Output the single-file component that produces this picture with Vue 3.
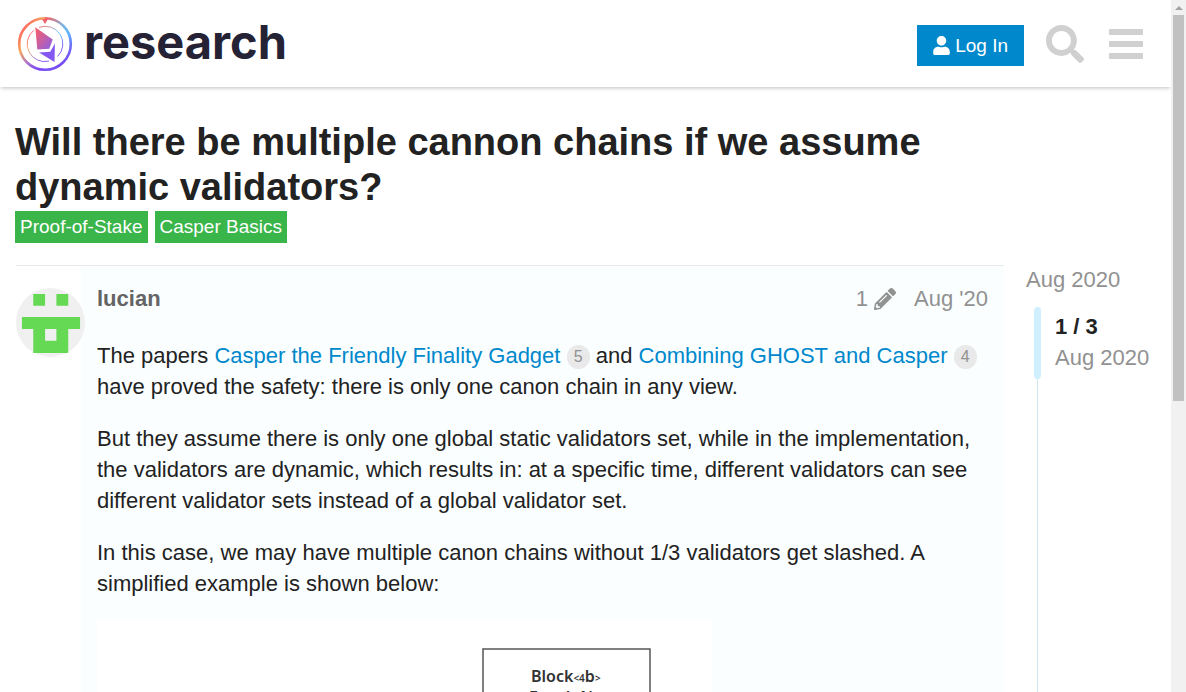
<script setup>
const tags = ['Proof-of-Stake', 'Casper Basics']
</script>

<template>
  <div class="window">
    <div class="page">
      <header class="site-header">
        <a class="brand" href="#" aria-label="research home">
          <svg class="brand-mark" viewBox="0 0 56 56" aria-hidden="true">
            <defs>
              <linearGradient id="left" x1="0" y1="0" x2="0.7" y2="1">
                <stop offset="0.15" stop-color="#ff5f62" />
                <stop offset="0.45" stop-color="#f5a75c" />
                <stop offset="0.75" stop-color="#a76ed0" />
                <stop offset="1" stop-color="#7a4bf5" />
              </linearGradient>
              <linearGradient id="right" x1="0" y1="0" x2="0.3" y2="1">
                <stop offset="0" stop-color="#f5605f" />
                <stop offset="0.3" stop-color="#84b4dc" />
                <stop offset="0.5" stop-color="#5cb8ff" />
                <stop offset="0.75" stop-color="#6b72f5" />
                <stop offset="1" stop-color="#7a4bf5" />
              </linearGradient>
              <linearGradient id="gem" x1="0" y1="0" x2="1" y2="1">
                <stop offset="0" stop-color="#ff5f62" />
                <stop offset="1" stop-color="#8a60e8" />
              </linearGradient>
            </defs>
            <path d="M28 2.2A25.8 25.8 0 0 0 28 53.8" fill="none" stroke="url(#left)" stroke-width="2.6" />
            <path d="M28 2.2A25.8 25.8 0 0 1 28 53.8" fill="none" stroke="url(#right)" stroke-width="2.6" />
            <path d="M25 3h6l-3 5z" fill="#ee5f6c" />
            <path d="M16.500 14.500A17.6 17.6 0 0 0 32 45.100" fill="none" stroke="url(#left)" stroke-width="0.9" />
            <path d="M22 11.400A17.6 17.6 0 0 1 40.500 40.500" fill="none" stroke="url(#right)" stroke-width="0.9" />
            <path d="M18.300 11.300 35.700 23.600 32.300 32.800 20.300 33.500z" fill="url(#gem)" />
            <path d="M22 36.600 33.300 35.700 37.900 27.500 37.500 46z" fill="#8457f2" />
          </svg>
          <span class="brand-name">research</span>
        </a>
        <nav class="header-actions" aria-label="Site">
          <button class="login" type="button">
            <svg class="login-icon" viewBox="0 0 448 512" aria-hidden="true">
              <path fill="currentColor" d="M224 256c70.700 0 128-57.300 128-128S294.700 0 224 0 96 57.300 96 128s57.300 128 128 128zm89.600 32h-16.700c-22.200 10.200-46.900 16-72.900 16s-50.600-5.800-72.900-16h-16.700C60.200 288 0 348.200 0 422.400V464c0 26.500 21.500 48 48 48h352c26.500 0 48-21.500 48-48v-41.600c0-74.200-60.200-134.400-134.400-134.400z" />
            </svg>
            Log In
          </button>
          <button class="icon-button" type="button" aria-label="Search">
            <svg class="search-icon" viewBox="0 0 512 512" aria-hidden="true">
              <path fill="currentColor" d="M505 442.700L405.300 343c-4.500-4.500-10.600-7-17-7H372c27.600-35.300 44-79.700 44-128C416 93.100 322.900 0 208 0S0 93.100 0 208s93.100 208 208 208c48.300 0 92.700-16.400 128-44v16.300c0 6.400 2.500 12.500 7 17l99.700 99.700c9.400 9.400 24.600 9.400 33.900 0l28.300-28.300c9.400-9.400 9.400-24.600.1-34zM208 336c-70.700 0-128-57.200-128-128 0-70.700 57.200-128 128-128 70.700 0 128 57.200 128 128 0 70.700-57.200 128-128 128z" />
            </svg>
          </button>
          <button class="icon-button" type="button" aria-label="Menu">
            <svg class="menu-icon" viewBox="0 0 34 30" aria-hidden="true">
              <g fill="currentColor">
                <rect width="34" height="6" rx="1" />
                <rect y="12" width="34" height="6" rx="1" />
                <rect y="24" width="34" height="6" rx="1" />
              </g>
            </svg>
          </button>
        </nav>
      </header>

      <main class="topic">
        <h1>Will there be multiple cannon chains if we assume dynamic validators?</h1>
        <div class="tags">
          <a v-for="tag in tags" :key="tag" class="tag" href="#">{{ tag }}</a>
        </div>

        <div class="columns">
          <article class="post">
            <a class="avatar" href="#" aria-label="lucian">
              <svg viewBox="0 0 70 70" aria-hidden="true">
                <circle cx="35" cy="35" r="35" fill="#f0f0f0" />
                <path fill="#65d854" d="M17.500 6h12v12h-12zM41 6h12v12H41zM6 29.500h59v12H53V66H17.500V41.500H6zM29.500 41.500v12H41v-12z" />
              </svg>
            </a>
            <div class="post-body">
              <div class="post-meta">
                <a class="author" href="#">lucian</a>
                <button class="edits" type="button" aria-label="1 edit">
                  1
                  <svg class="pencil" viewBox="0 0 512 512" aria-hidden="true">
                    <path fill="currentColor" d="M497.900 142.100l-46.100 46.100c-4.700 4.700-12.300 4.700-17 0l-111-111c-4.700-4.700-4.700-12.300 0-17l46.100-46.100c18.700-18.700 49.100-18.700 67.900 0l60.100 60.100c18.800 18.700 18.800 49.100 0 67.900zM284.200 99.800L21.600 362.400.4 483.900c-2.900 16.400 11.400 30.600 27.800 27.800l121.500-21.300 262.600-262.600c4.700-4.700 4.700-12.300 0-17l-111-111c-4.800-4.700-12.400-4.700-17.100 0zM124.100 339.900c-5.500-5.500-5.500-14.300 0-19.800l154-154c5.500-5.500 14.300-5.500 19.800 0s5.500 14.300 0 19.800l-154 154c-5.500 5.500-14.300 5.500-19.800 0zM88 424h48v36.300l-64.500 11.300-31.100-31.100L51.700 376H88v48z" />
                  </svg>
                </button>
                <a class="date" href="#">Aug '20</a>
              </div>
              <div class="cooked">
                <p>
                  The papers <a href="#">Casper the Friendly Finality Gadget</a> <span class="clicks">5</span> and
                  <a href="#">Combining GHOST and Casper</a> <span class="clicks">4</span> have proved the safety: there
                  is only one canon chain in any view.
                </p>
                <p>
                  But they assume there is only one global static validators set, while in the implementation, the
                  validators are dynamic, which results in: at a specific time, different validators can see different
                  validator sets instead of a global validator set.
                </p>
                <p>
                  In this case, we may have multiple canon chains without 1/3 validators get slashed. A simplified
                  example is shown below:
                </p>
                <svg class="figure" viewBox="0 0 615 400" role="img" aria-label="Example block diagram">
                  <rect width="615" height="400" fill="#fff" />
                  <rect x="386" y="29" width="167" height="120" fill="none" stroke="#555" stroke-width="1.500" />
                  <g fill="#333" font-weight="600">
                    <text x="434" y="62" font-size="16">Block<tspan font-size="10">&lt;4</tspan>b<tspan font-size="10">&gt;</tspan></text>
                    <text x="432" y="83" font-size="16">Epoch N</text>
                  </g>
                </svg>
              </div>
            </div>
          </article>

          <aside class="timeline" aria-label="Topic timeline">
            <a class="start-date" href="#">Aug 2020</a>
            <div class="track">
              <div class="handle"></div>
              <div class="position">
                <strong>1 / 3</strong>
                <span>Aug 2020</span>
              </div>
            </div>
          </aside>
        </div>
      </main>
    </div>
    <div class="scrollbar" aria-hidden="true">
      <div class="scroll-arrow"></div>
      <div class="scroll-thumb"></div>
    </div>
  </div>
</template>

<style>
body {
  margin: 0;
  background: #fff;
}
</style>

<style scoped>
.window {
  display: grid;
  grid-template-columns: minmax(0, 1fr) 15px;
  height: 100vh;
  overflow: hidden;
  color: #222;
  font-family: "Liberation Sans", Arial, sans-serif;
  font-size: 22px;
  line-height: 31px;
}
a {
  color: inherit;
  text-decoration: none;
}
button {
  display: flex;
  align-items: center;
  padding: 0;
  border: 0;
  background: none;
  color: inherit;
  font: inherit;
  cursor: pointer;
}
.page {
  display: flex;
  flex-direction: column;
  min-height: 0;
  overflow: hidden;
}
.site-header {
  display: flex;
  flex: none;
  align-items: center;
  justify-content: space-between;
  height: 87px;
  padding: 0 25px 0 17px;
  box-shadow: 0 2px 4px -1px rgba(0, 0, 0, 0.25);
}
.brand {
  display: flex;
  align-items: center;
  gap: 11px;
}
.brand-mark {
  width: 56px;
  height: 56px;
}
.brand-name {
  padding-bottom: 4px;
  color: #252236;
  font: 700 47px/56px Inter, sans-serif;
}
.header-actions {
  display: flex;
  align-items: center;
  color: #d0d0d0;
}
.login {
  gap: 5px;
  height: 41px;
  margin: 4px 21px 0 0;
  padding: 0 16px;
  background: #0088cc;
  color: #fff;
  font-size: 19px;
}
.login-icon {
  width: 17px;
  height: 19px;
}
.icon-button {
  width: 40px;
  height: 40px;
  justify-content: center;
}
.icon-button + .icon-button {
  margin-left: 21px;
}
.search-icon {
  width: 38px;
  height: 38px;
}
.menu-icon {
  width: 34px;
  height: 30px;
}
.topic {
  min-height: 0;
  padding: 33px 15px 0;
}
h1 {
  max-width: 988px;
  margin: 0;
  font-size: 38px;
  line-height: 45px;
}
.tags {
  display: flex;
  gap: 7px;
  margin: 1px 0 22px;
}
.tag {
  padding: 0 5px;
  background: #3ab54a;
  color: #fff;
  font-size: 19px;
  line-height: 32px;
}
.columns {
  display: grid;
  grid-template-columns: minmax(0, 1fr) 130px;
  gap: 22px;
}
.post {
  display: grid;
  grid-template-columns: 65px minmax(0, 1fr);
  margin-left: 1px;
  border-top: 1px solid #e9e9e9;
}
.avatar {
  z-index: 1;
  width: 69px;
  height: 69px;
  padding-top: 22px;
}
.avatar svg {
  display: block;
}
.post-body {
  padding: 17px 16px 0;
  background: #fafeff;
}
.post-meta {
  display: flex;
  align-items: center;
  color: #919191;
}
.author {
  margin-right: auto;
  color: #646464;
  font-weight: bold;
}
.edits {
  gap: 6px;
}
.pencil {
  width: 22px;
  height: 22px;
}
.date {
  margin-left: 18px;
}
.cooked {
  padding-top: 26px;
}
p {
  margin: 0 0 21px;
}
p a {
  color: #0088cc;
}
.clicks {
  display: inline-block;
  min-width: 23px;
  border-radius: 12px;
  background: #e9e9e9;
  color: #919191;
  font-size: 16px;
  line-height: 24px;
  text-align: center;
  vertical-align: 1px;
}
.figure {
  display: block;
  width: 615px;
  max-width: 100%;
  font-family: "Noto Sans", sans-serif;
}
.timeline {
  color: #919191;
}
.start-date {
  display: block;
  line-height: 29px;
}
.track {
  display: flex;
  gap: 14px;
  height: 600px;
  margin: 13px 0 0 11px;
  border-left: 1px solid #d1e7f2;
}
.handle {
  width: 7px;
  height: 72px;
  margin-left: -4px;
  border-radius: 4px;
  background: #d1f0ff;
}
.position {
  padding-top: 4px;
}
.position strong {
  display: block;
  color: #222;
}
.scrollbar {
  display: flex;
  flex-direction: column;
  align-items: center;
  background: #f1f1f1;
}
.scroll-arrow {
  width: 0;
  margin: 6px 0 5px;
  border: 4px solid transparent;
  border-top: 0;
  border-bottom-color: #a3a3a3;
}
.scroll-thumb {
  width: 11px;
  height: 386px;
  background: #c1c1c1;
}
</style>
